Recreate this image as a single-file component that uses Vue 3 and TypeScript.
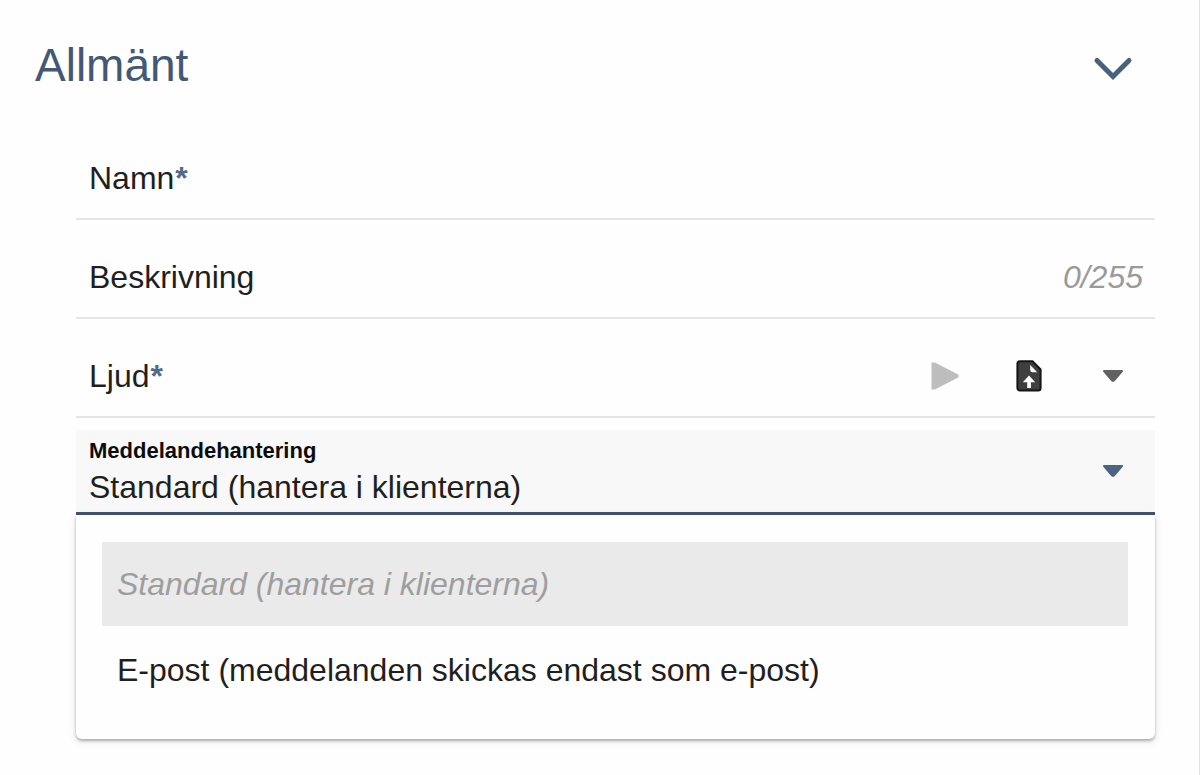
<script setup lang="ts">
import { ref } from 'vue'

interface Choice {
  value: string
  label: string
}

const maxLength = 255
const name = ref('')
const description = ref('')
const sound = ref('')
const handling = ref('standard')
const expanded = ref(true)
const menuOpen = ref(true)

const choices: Choice[] = [
  { value: 'standard', label: 'Standard (hantera i klienterna)' },
  { value: 'email', label: 'E-post (meddelanden skickas endast som e-post)' },
]

function choose(choice: Choice) {
  handling.value = choice.value
  menuOpen.value = false
}
</script>

<template>
  <main class="page">
    <header class="header">
      <h1 class="title">Allmänt</h1>
      <button class="icon-button" type="button" aria-label="Visa eller dölj Allmänt" :aria-expanded="expanded" @click="expanded = !expanded">
        <svg width="40" height="26" viewBox="0 0 40 26" fill="none">
          <path d="M4 4.5 20 20.5 36 4.5" stroke="#48617f" stroke-width="5" stroke-linecap="round" />
        </svg>
      </button>
    </header>

    <form v-if="expanded" class="form" @submit.prevent>
      <div class="row">
        <label class="label" for="name">Namn<span class="required">*</span></label>
        <input id="name" v-model="name" class="input" type="text" required />
      </div>

      <div class="row">
        <label class="label" for="description">Beskrivning</label>
        <input id="description" v-model="description" class="input" type="text" :maxlength="maxLength" />
        <span class="counter">{{ description.length }}/{{ maxLength }}</span>
      </div>

      <div class="row">
        <label class="label" for="sound">Ljud<span class="required">*</span></label>
        <select id="sound" v-model="sound" class="input" required>
          <option value=""></option>
        </select>
        <button class="icon-button" type="button" aria-label="Spela upp" disabled>
          <svg width="28" height="28" viewBox="0 0 28 28"><path d="M0.5 0.5H4L27 12.5Q28.5 14 27 15.5L4 27.5H0.5Z" fill="#bdbdbd" /></svg>
        </button>
        <button class="icon-button" type="button" aria-label="Ladda upp fil">
          <svg width="26" height="32" viewBox="0 0 26 32">
            <path d="M4 1.2H16.5L24.6 9.5V28a2.5 2.5 0 0 1-2.5 2.5H4A2.5 2.5 0 0 1 1.4 28V3.8A2.6 2.6 0 0 1 4 1.2Z" fill="#3f3f3f" stroke="#151515" stroke-width="2" />
            <path d="M14.2 5V9.8a2.5 2.5 0 0 0 2.5 2.5H21.2Z" fill="#fff" />
            <path d="M13 15.5 19.2 22.3H15V28H11.2V22.3H6.8Z" fill="#fff" />
          </svg>
        </button>
        <button class="icon-button" type="button" aria-label="Visa ljud">
          <svg width="22" height="14" viewBox="0 0 22 14"><path d="M2 2H20L12.3 11.2Q11 12.7 9.7 11.2Z" fill="#616161" stroke="#616161" stroke-width="2" stroke-linejoin="round" /></svg>
        </button>
      </div>

      <div class="picker">
        <div class="picker-field">
          <div class="picker-text">
            <label class="picker-label" for="handling">Meddelandehantering</label>
            <select id="handling" v-model="handling" class="picker-select">
              <option v-for="choice in choices" :key="choice.value" :value="choice.value">{{ choice.label }}</option>
            </select>
          </div>
          <button class="icon-button" type="button" aria-label="Visa alternativ" :aria-expanded="menuOpen" @click="menuOpen = !menuOpen">
            <svg width="22" height="14" viewBox="0 0 22 14"><path d="M2 2H20L12.3 11.2Q11 12.7 9.7 11.2Z" fill="#4b6482" stroke="#4b6482" stroke-width="2" stroke-linejoin="round" /></svg>
          </button>
        </div>
        <div v-if="menuOpen" class="menu">
          <button
            v-for="choice in choices"
            :key="choice.value"
            class="option"
            type="button"
            :disabled="choice.value === handling"
            @click="choose(choice)"
          >
            {{ choice.label }}
          </button>
        </div>
      </div>
    </form>
  </main>
</template>

<style>
body {
  margin: 0;
  background: #fefefe;
}
</style>

<style scoped>
.page {
  box-sizing: border-box;
  min-height: 100vh;
  padding: 16px 44px 36px 35px;
  border-right: 1px solid #e2e2e2;
  font-family: "Liberation Sans", Arial, sans-serif;
  font-size: 32px;
  line-height: 36px;
  color: #1f1f1f;
}

button,
input,
select {
  box-sizing: border-box;
  margin: 0;
  padding: 0;
  border: 0;
  border-radius: 0;
  background: transparent;
  color: inherit;
  font: inherit;
  outline: none;
  appearance: none;
}

.header {
  display: flex;
  align-items: center;
  justify-content: space-between;
  box-sizing: border-box;
  height: 105px;
}

.title {
  margin: 0 0 8px;
  font-size: 46px;
  font-weight: 400;
  line-height: 48px;
  color: #435875;
}

.icon-button {
  display: flex;
  flex: 0 0 84px;
  align-items: center;
  justify-content: center;
  height: 48px;
  cursor: pointer;
}

.form {
  padding-left: 41px;
}

.row {
  display: flex;
  align-items: center;
  box-sizing: border-box;
  height: 99px;
  padding-top: 16px;
  border-bottom: 2px solid #e5e5e5;
}

.label {
  padding-left: 13px;
}

.required {
  margin-left: 1px;
  font-weight: 700;
  color: #53698a;
}

.input {
  flex: 1;
  min-width: 0;
}

.counter {
  padding-right: 12px;
  font-style: italic;
  color: #9a9a9a;
}

.picker {
  position: relative;
  margin-top: 12px;
}

.picker-field {
  display: flex;
  align-items: center;
  box-sizing: border-box;
  height: 85px;
  border-bottom: 3px solid #41546f;
  background: #f8f8f8;
}

.picker-text {
  display: flex;
  flex: 1;
  flex-direction: column;
  min-width: 0;
  padding: 0 0 4px 13px;
}

.picker-label {
  font-size: 22px;
  font-weight: 700;
  line-height: 36px;
  color: #0c0c0c;
}

.picker-select {
  height: 36px;
}

.menu {
  position: absolute;
  top: 100%;
  right: 0;
  left: 0;
  box-sizing: border-box;
  padding: 27px 27px 25px 26px;
  border-radius: 0 0 6px 6px;
  background: #fefefe;
  box-shadow: 0 2px 3px rgba(0, 0, 0, 0.28), 0 2px 10px rgba(0, 0, 0, 0.1);
}

.option {
  display: block;
  width: 100%;
  height: 88px;
  padding: 0 15px;
  text-align: left;
  cursor: pointer;
}

.option:disabled {
  height: 84px;
  background: #eaeaea;
  color: #9e9e9e;
  font-style: italic;
  cursor: default;
}
</style>
